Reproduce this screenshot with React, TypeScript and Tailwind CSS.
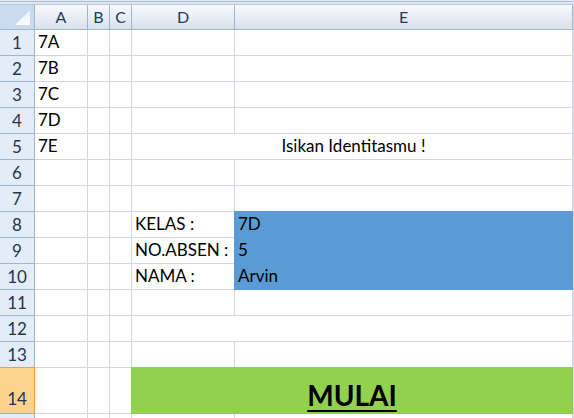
import type { ReactNode } from 'react';

const cols = ['A', 'B', 'C', 'D', 'E'];
const colWidths = ['w-[52px]', 'w-[21px]', 'w-[21px]', 'w-[102px]', 'w-[337px]'];

type Row = { a?: string; d?: string; e?: string; merged?: 'text' | 'plain' | 'start'; fill?: 'blue' };

const rows: Row[] = [
  { a: '7A' },
  { a: '7B' },
  { a: '7C' },
  { a: '7D' },
  { a: '7E', merged: 'text' },
  {},
  {},
  { d: 'KELAS :', e: '7D', fill: 'blue' },
  { d: 'NO.ABSEN :', e: '5', fill: 'blue' },
  { d: 'NAMA :', e: 'Arvin', fill: 'blue' },
  {},
  { merged: 'plain' },
  {},
  { merged: 'start' },
  {},
];

function Cell({ children, className = '' }: { children?: ReactNode; className?: string }) {
  return <div className={`bg-white pl-[3px] text-[17px] leading-[24px] text-black whitespace-nowrap ${className}`}>{children}</div>;
}

export default function App() {
  return (
    <div className="flex h-[418px] w-[574px] overflow-hidden bg-white font-['Lato',sans-serif]">
      <div className="w-[573px] shrink-0">
        {/* strip above the headers */}
        <div className="h-px bg-[#e3eaf3]" />
        <div className="h-px bg-[#a9bdd4]" />
        <div className="h-[2px] bg-[#dfe7f1]" />
        <div className="h-px bg-[#b7c8db]" />

        {/* column headers */}
        <div className="flex h-[25px] gap-px border-b border-[#9eb6ce] bg-[#9eb6ce] pr-px">
          <div className="relative h-[24px] w-[34px] shrink-0 bg-[#c9d9ee]">
            <svg className="absolute left-0 top-0" width="34" height="24" viewBox="0 0 34 24">
              <defs>
                <linearGradient id="tri" x1="0" y1="0" x2="0" y2="1">
                  <stop offset="0" stopColor="#e9f0f8" />
                  <stop offset="1" stopColor="#fbfcfe" />
                </linearGradient>
              </defs>
              <polygon points="30,5 30,20 15,20" fill="url(#tri)" />
            </svg>
          </div>
          {cols.map((c, i) => (
            <div
              key={c}
              className={`${colWidths[i]} flex h-[24px] shrink-0 items-center justify-center bg-gradient-to-b from-[#f8fafd] to-[#d9e2ed] text-[16px] text-[#213b5c]`}
            >
              {c}
            </div>
          ))}
        </div>

        <div className="flex">
          {/* row headers */}
          <div className="flex w-[35px] shrink-0 flex-col gap-px bg-[#9eb6ce] pr-px">
            {rows.map((_, i) => (
              <div
                key={i}
                className={
                  i === 13
                    ? 'relative z-10 flex h-[45px] items-end justify-center bg-[#fdd28c] pb-[2px] text-[17px] leading-[24px] text-[#22364f] outline outline-1 outline-[#f0a040]'
                    : 'flex h-[25px] items-center justify-center bg-[#e4ecf7] text-[17px] leading-[24px] text-[#22364f]'
                }
              >
                {i < 14 ? i + 1 : null}
              </div>
            ))}
          </div>

          {/* cells */}
          <div className="grid w-[538px] shrink-0 grid-cols-[52px_21px_21px_102px_337px] grid-rows-[repeat(13,25px)_45px_25px] gap-px bg-[#d0d7e5] pr-px">
            {rows.map((r, i) => (
              <RowCells key={i} r={r} />
            ))}
          </div>
        </div>
      </div>
      <div className="w-px shrink-0 bg-[#d4d9e0]" />
    </div>
  );
}

function RowCells({ r }: { r: Row }) {
  return (
    <>
      <Cell>{r.a}</Cell>
      <Cell />
      <Cell />
      {r.merged === 'text' && (
        <Cell className="col-span-2 text-center">Isikan Identitasmu !</Cell>
      )}
      {r.merged === 'plain' && <Cell className="col-span-2" />}
      {r.merged === 'start' && (
        <div className="relative z-10 col-span-2 flex items-end justify-center bg-[#92d050] pb-[1px] outline outline-1 outline-[#92d050]">
          <span className="text-[28px] font-bold leading-[34px] text-black underline decoration-2 underline-offset-[4px]">MULAI</span>
        </div>
      )}
      {!r.merged && (
        <>
          <Cell>{r.d}</Cell>
          {r.fill === 'blue' ? (
            <Cell className="relative z-10 bg-[#5b9bd5]! outline outline-1 outline-[#5b9bd5]">{r.e}</Cell>
          ) : (
            <Cell>{r.e}</Cell>
          )}
        </>
      )}
    </>
  );
}
